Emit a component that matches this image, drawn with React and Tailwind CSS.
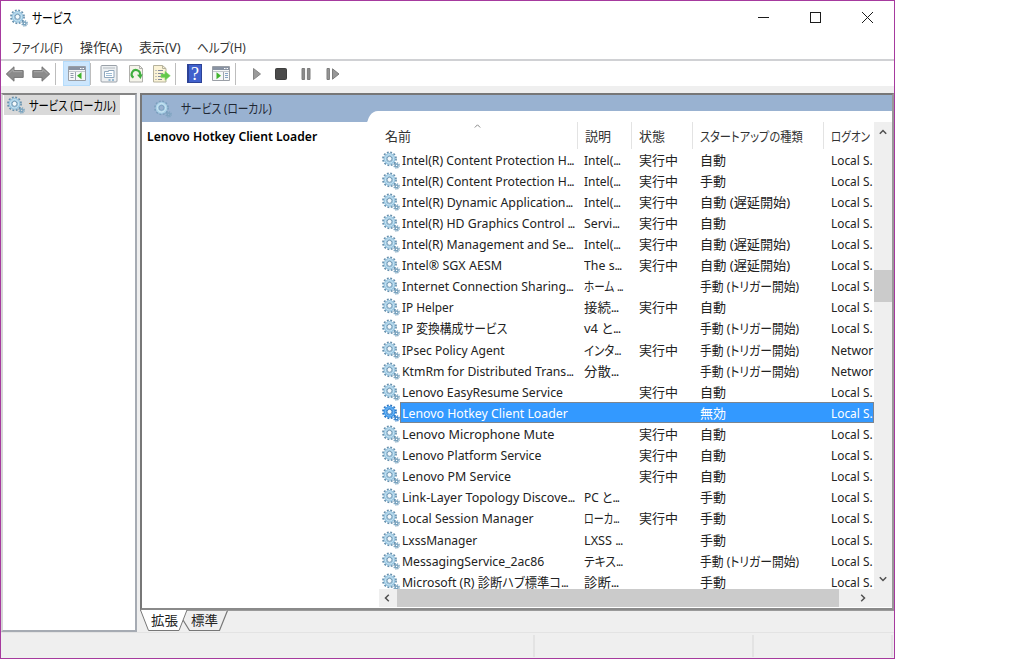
import React, { useLayoutEffect, useRef, useState } from "react";

const STARTUP = {
  auto: ["自動", 26],
  manual: ["手動", 26],
  delayed: ["自動 (遅延開始)", 90],
  trigger: ["手動 (トリガー開始)", 99],
  disabled: ["無効", 26],
};

// name, name width, description, description width, running, startup, log on as
const SERVICES = [
  ["Intel(R) Content Protection H...", 172, "Intel(...", 36, true, "auto", "Local S."],
  ["Intel(R) Content Protection H...", 172, "Intel(...", 36, true, "manual", "Local S."],
  ["Intel(R) Dynamic Application...", 170, "Intel(...", 36, true, "delayed", "Local S."],
  ["Intel(R) HD Graphics Control ...", 172, "Servi...", 35, true, "auto", "Local S."],
  ["Intel(R) Management and Se...", 171, "Intel(...", 36, true, "delayed", "Local S."],
  ["Intel® SGX AESM", 100, "The s...", 37, true, "delayed", "Local S."],
  ["Internet Connection Sharing...", 171, "ホーム ...", 39, false, "trigger", "Local S."],
  ["IP Helper", 52, "接続...", 34, true, "auto", "Local S."],
  ["IP 変換構成サービス", 105, "v4 と...", 36, false, "trigger", "Local S."],
  ["IPsec Policy Agent", 103, "インタ...", 37, true, "trigger", "Networ"],
  ["KtmRm for Distributed Trans...", 171, "分散...", 34, false, "trigger", "Networ"],
  ["Lenovo EasyResume Service", 161, "", 0, true, "auto", "Local S."],
  ["Lenovo Hotkey Client Loader", 166, "", 0, false, "disabled", "Local S."],
  ["Lenovo Microphone Mute", 152, "", 0, true, "auto", "Local S."],
  ["Lenovo Platform Service", 139, "", 0, true, "auto", "Local S."],
  ["Lenovo PM Service", 109, "", 0, true, "auto", "Local S."],
  ["Link-Layer Topology Discove...", 172, "PC と...", 35, false, "manual", "Local S."],
  ["Local Session Manager", 132, "ローカ...", 35, true, "manual", "Local S."],
  ["LxssManager", 75, "LXSS ...", 38, false, "manual", "Local S."],
  ["MessagingService_2ac86", 142, "テキス...", 38, false, "trigger", "Local S."],
  ["Microsoft (R) 診断ハブ標準コ...", 166, "診断...", 34, false, "manual", "Local S."],
];
const SELECTED = 12;

// Text squeezed or stretched to an exact width
function Fit({ w, className = "", children }) {
  const ref = useRef(null);
  const [scale, setScale] = useState(1);
  useLayoutEffect(() => {
    const natural = ref.current.offsetWidth;
    if (natural) setScale(w / natural);
  }, [w, children]);
  const dots = children.endsWith("...");

  return (
    <span className={`block whitespace-pre ${className}`} style={{ width: w }}>
      <span ref={ref} className="inline-block origin-left" style={{ transform: `scaleX(${scale})` }}>
        {dots ? children.slice(0, -3) : children}
        {dots && <span className="tracking-[-1.1px]">...</span>}
      </span>
    </span>
  );
}

function Gears({ pale = false, selected = false }) {
  const ring = selected ? "#3d97ea" : pale ? "#a9d2e8" : "#98c5e0";
  const teeth = selected ? "#2a74bf" : pale ? "#7a9fbd" : "#668fac";
  const small = selected ? "#3a86cf" : pale ? "#7fa4c0" : "#7ba4bf";
  return (
    <svg width="18" height="18" viewBox="0 0 18 18" className="shrink-0" fill="none">
      <circle cx="7.5" cy="7.8" r="6.5" stroke={teeth} strokeWidth="1.8" strokeDasharray="1.85 1.55" />
      <circle cx="7.5" cy="7.8" r="4.3" stroke={ring} strokeWidth="3.2" />
      <circle cx="7.5" cy="7.8" r="4.2" stroke={selected ? "#7cbcf2" : "#cde6f3"} strokeWidth="1" />
      <circle cx="7.5" cy="7.8" r="2.5" stroke={teeth} strokeWidth="0.9" fill={pale ? "none" : "#f4fafd"} />
      <circle cx="14.6" cy="14.4" r="2.6" stroke={small} strokeWidth="1.4" strokeDasharray="1.2 0.85" />
      <circle cx="14.6" cy="14.4" r="1.4" stroke={small} strokeWidth="1.4" />
    </svg>
  );
}

function Arrow({ flip = false }) {
  return (
    <svg width="20" height="18" viewBox="0 0 20 18" className={flip ? "-scale-x-100" : ""}>
      <path d="M1.3 9 9 1.8v3.8h9.2v6.8H9v3.8z" fill="#8b8b8b" stroke="#767676" strokeLinejoin="round" />
      <path d="M3.5 8.8 8.2 4.5v2.2h9" fill="none" stroke="#aaa" />
    </svg>
  );
}

function PanelIcon({ play = false }) {
  return (
    <svg width="18" height="17" viewBox="0 0 18 17">
      <path d="M.5 1.5h17v14H.5z" fill="#f6f7f8" stroke="#9a9fa6" />
      <path d="M1 2h16v3H1z" fill="#8993a3" />
      <path d="M12 3.5h1.5m1 0H16" stroke="#fff" />
      <path d="M1 6.5h16" stroke="#c3c7cd" />
      {play ? (
        <>
          <path d="M11.5 7v8" stroke="#9da5b0" />
          <path d="M13 8.5h3m-3 2h3m-3 2h3" stroke="#86a3c4" />
          <path d="M4.5 7.3 9 10.8l-4.5 3.5z" fill="#3fb32c" />
        </>
      ) : (
        <>
          <path d="M7.5 7v8" stroke="#9da5b0" />
          <path d="M2.5 8.5h3m-3 2h3m-3 2h3" stroke="#929baa" />
          <path d="M13.5 7.3 9 10.8l4.5 3.5z" fill="#3fb32c" />
        </>
      )}
    </svg>
  );
}

function PropertiesIcon() {
  return (
    <svg width="18" height="20" viewBox="0 0 18 20" fill="none">
      <rect x="1" y="1.5" width="16" height="16.5" rx="1" fill="#edf0f2" stroke="#9aa1a8" />
      <path d="M3 4h12" stroke="#b3bac0" />
      <path d="M4.5 7.5h4v-1h5.5v7H4.5z" fill="#fff" stroke="#91a8bd" />
      <path d="M6 9.5h6m-6 2h6" stroke="#9dbcd4" />
      <path d="M8.5 16h2m1.5 0h2" stroke="#78a7c8" strokeWidth="1.4" />
    </svg>
  );
}

function RefreshIcon() {
  return (
    <svg width="16" height="20" viewBox="0 0 16 20" fill="none">
      <path d="M1.5 1.5h10l3 3v13.5h-13z" fill="#f5f4ea" stroke="#b0b0ac" />
      <path d="M11.5 1.5v3h3" stroke="#b0b0ac" />
      <path d="M5.5 13.7A4.2 4.2 0 1 1 12 11" stroke="#3fae3f" strokeWidth="2.2" />
      <path d="m9 10.8 5.6-.5-2 4.6z" fill="#3fae3f" />
    </svg>
  );
}

function ExportIcon() {
  return (
    <svg width="19" height="20" viewBox="0 0 19 20" fill="none">
      <path d="M1.5 1.5h9l3.5 3v13.5H1.5z" fill="#fbf3d6" stroke="#b5b29c" />
      <path d="M10.5 1.5v3H14" stroke="#b5b29c" />
      <path d="M3.5 6.5h1m1.5 0h5m-7.5 3h1m1.5 0h5m-7.5 3h1m1.5 0h4m-6.5 3h1m1.5 0h4" stroke="#80889c" />
      <path d="M9 10h4V7.3l5.3 4.5-5.3 4.5v-2.7H9z" fill="#62c84b" stroke="#86d96e" strokeWidth=".6" />
    </svg>
  );
}

function HelpIcon() {
  return (
    <span className="flex h-[19px] w-[15px] items-center justify-center border border-l-2 border-[#2c4296] bg-[#3f60cc] font-['Liberation_Serif',serif] text-[18px] leading-none text-white">
      ?
    </span>
  );
}

function Separator({ className = "" }) {
  return <span className={`h-[22px] w-px shrink-0 bg-[#bdbdbd] ${className}`} />;
}

function Toolbar() {
  return (
    <div className="flex h-[25px] items-center bg-white pl-1">
      <Arrow />
      <span className="ml-[6px]"><Arrow flip /></span>
      <Separator className="ml-1" />
      <span className="ml-[7px] flex h-[25px] w-[27px] items-center justify-center border border-[#b5dcfb] bg-[#cce6fd]">
        <PanelIcon />
      </span>
      <Separator />
      <span className="ml-[9px]"><PropertiesIcon /></span>
      <span className="ml-[10px]"><RefreshIcon /></span>
      <span className="ml-[8px]"><ExportIcon /></span>
      <Separator className="ml-[4px]" />
      <span className="ml-[11px]"><HelpIcon /></span>
      <span className="ml-[10px]"><PanelIcon play /></span>
      <Separator className="ml-[5px]" />
      <svg width="90" height="16" viewBox="0 0 90 16" className="ml-[16px]">
        <path d="m1.5 2.5 7 5.5-7 5.5z" fill="#9b9b9b" stroke="#858585" />
        <rect x="23.5" y="2.5" width="11" height="11" rx="1" fill="#4a4a4a" stroke="#3e3e3e" />
        <path d="M50 2.5h2.6v11H50zm5.4 0H58v11h-2.6z" fill="#8b8b8b" stroke="#7c7c7c" />
        <path d="M75 2.500h2.400v11H75zm5.500.3 6.500 5.200-6.500 5.200z" fill="#979797" stroke="#7c7c7c" />
      </svg>
    </div>
  );
}

function TitleBar() {
  return (
    <div className="flex h-9 items-center pb-[3px] pl-[9px]">
      <Gears />
      <Fit w={40} className="ml-1 text-[14px] text-black">サービス</Fit>
      <svg width="116" height="14" viewBox="0 0 116 14" className="mr-[20px] ml-auto" fill="none" stroke="#1c1c1c">
        <path d="M0 6.5h11" />
        <rect x="52.5" y="1.5" width="10" height="10" />
        <path d="m104 1 11 11m0-11-11 11" />
      </svg>
    </div>
  );
}

function ServiceRow({ row, selected }) {
  const [name, nameW, desc, descW, running, startup, logon] = row;
  const [label, labelW] = STARTUP[startup];
  return (
    <div className="flex h-[21.12px] shrink-0 items-center pl-[3px] leading-[15px]">
      <Gears selected={selected} />
      <div
        className={`flex h-[21px] flex-1 items-center overflow-hidden pt-px ${
          selected ? "bg-[#3399ff] text-white outline-1 -outline-offset-1 outline-[#7c858f]" : ""
        }`}
      >
        <div className="w-[184px] shrink-0 pl-[2px]"><Fit w={nameW}>{name}</Fit></div>
        <div className="w-[55px] shrink-0">{desc && <Fit w={descW}>{desc}</Fit>}</div>
        <div className="w-[61px] shrink-0">{running && <Fit w={39}>実行中</Fit>}</div>
        <div className="w-[131px] shrink-0"><Fit w={labelW}>{label}</Fit></div>
        <div className="shrink-0"><Fit w={logon === "Networ" ? 42 : 42}>{logon}</Fit></div>
      </div>
    </div>
  );
}

function ListHeader() {
  return (
    <div className="relative flex h-[27px] items-center overflow-hidden text-[#333]">
      <div className="flex h-full w-[199px] shrink-0 items-center border-r border-[#e3e3e3] pl-[6px]"><Fit w={26}>名前</Fit></div>
      <div className="flex h-full w-[54px] shrink-0 items-center border-r border-[#e3e3e3] pl-[7px]"><Fit w={26}>説明</Fit></div>
      <div className="flex h-full w-[61px] shrink-0 items-center border-r border-[#e3e3e3] pl-[7px]"><Fit w={26}>状態</Fit></div>
      <div className="flex h-full w-[131px] shrink-0 items-center border-r border-[#e3e3e3] pl-[7px]"><Fit w={103}>スタートアップの種類</Fit></div>
      <div className="shrink-0 pl-[7px]"><Fit w={39}>ログオン</Fit></div>
      <svg width="7" height="4" viewBox="0 0 7 4" className="absolute top-[2px] left-[95px]" fill="none" stroke="#888">
        <path d="m.8 3.5 2.7-2.7 2.7 2.7" />
      </svg>
    </div>
  );
}

function Chevron({ className = "" }) {
  return (
    <svg width="8" height="6" viewBox="0 0 8 6" className={className} fill="none" stroke="#505050" strokeWidth="1.5">
      <path d="m.8 4.8 3.2-3.3 3.2 3.3" />
    </svg>
  );
}

function ServiceList() {
  return (
    <div className="flex w-[513px] shrink-0 flex-col">
      <div className="flex h-[467px]">
        <div className="w-[495px] overflow-hidden">
          <ListHeader />
          <div className="flex h-[440px] flex-col overflow-hidden">
            {SERVICES.map((row, i) => (
              <ServiceRow key={i} row={row} selected={i === SELECTED} />
            ))}
          </div>
        </div>
        <div className="flex flex-1 flex-col items-center bg-[#efefef]">
          <Chevron className="mt-[7px]" />
          <div className="mt-[135px] h-8 w-full bg-[#cbcbcb]" />
          <Chevron className="mt-auto mb-[7px] rotate-180" />
        </div>
      </div>
      <div className="flex h-[18px] items-center bg-[#efefef]">
        <Chevron className="mr-[6px] ml-[4px] -rotate-90" />
        <div className="h-full w-[442px] bg-[#cbcbcb]" />
        <Chevron className="ml-[20px] rotate-90" />
      </div>
    </div>
  );
}

function DetailPane() {
  return (
    <div className="flex h-[517px] w-[754px] flex-col border-2 border-t-[#777] border-r-[#999] border-b-[#8a8a8a] border-l-[#777] bg-white">
      <div className="relative flex h-[27px] shrink-0 items-center bg-[#99b2d1] pl-[12px]">
        <Gears pale />
        <Fit w={91} className="-mt-px ml-[9px] text-[#1f2733]">サービス (ローカル)</Fit>
        <svg width="525" height="11" viewBox="0 0 525 11" className="absolute right-0 bottom-0">
          <path d="M0 11C1 10 1 7 3 4.5Q6 0 11 0H525V11z" fill="#fff" />
        </svg>
      </div>
      <div className="flex flex-1">
        <div className="flex-1 pt-[5px] pl-[5px]">
          <Fit w={170} className="font-semibold text-black">Lenovo Hotkey Client Loader</Fit>
        </div>
        <ServiceList />
      </div>
    </div>
  );
}

function ViewTabs() {
  return (
    <div className="relative flex h-[22px] items-center border-t border-[#9a9a9a] pb-[3px]">
      <svg width="90" height="22" viewBox="0 0 90 22" className="absolute -top-px left-0" stroke="#777">
        <path d="M43 10 49.5 20.5H79.5L87.5.5" fill="#efefef" strokeWidth="1.2" />
        <path d="M.5 0 8.5 20.5H39L47 0" fill="#fff" />
      </svg>
      <Fit w={27} className="relative ml-[11px]">拡張</Fit>
      <Fit w={27} className="relative ml-[13px]">標準</Fit>
    </div>
  );
}

function StatusBar() {
  return (
    <div className="flex flex-1 border-t border-[#e3e3e3] pt-[2px] pb-[1px]">
      <div className="w-[534px] border-r-2 border-[#e3e3e3]" />
      <div className="w-[219px] border-r-2 border-[#e3e3e3]" />
      <div className="w-[139px] border-r-2 border-[#e3e3e3]" />
    </div>
  );
}

export default function App() {
  return (
    <div className="h-[659px] w-[1024px] overflow-hidden bg-white font-['Noto_Sans','Noto_Sans_CJK_JP',sans-serif] text-[13px] leading-[18px] text-[#222] [font-feature-settings:'palt']">
      <div className="flex h-full w-[895px] flex-col border border-[#a63a9e] bg-[#efefef]">
        <div className="bg-white">
          <TitleBar />
          <div className="flex h-[22px] items-center pb-[2px] pl-[11px] text-[#333]">
            <Fit w={51}>ファイル(F)</Fit>
            <Fit w={42} className="ml-[17px]">操作(A)</Fit>
            <Fit w={42} className="ml-[17px]">表示(V)</Fit>
            <Fit w={49} className="ml-[16px]">ヘルプ(H)</Fit>
          </div>
          <div className="h-[2px] bg-[#d0d1d4]" />
          <Toolbar />
        </div>
        <div className="mt-[7px] flex h-[539px]">
          <div className="h-full w-[136px] border-2 border-t-[#858585] border-r-[#a6abb3] border-b-[#a6abb3] border-l-[#d6d6d6] bg-white">
            <div className="ml-[1px] flex h-[20px] w-[116px] items-center bg-[#d9d9d9] pl-[3px]">
              <Gears />
              <Fit w={87} className="ml-[4px] text-black">サービス (ローカル)</Fit>
            </div>
          </div>
          <div className="ml-[3px] w-[754px]">
            <DetailPane />
            <ViewTabs />
          </div>
        </div>
        <StatusBar />
      </div>
    </div>
  );
}
